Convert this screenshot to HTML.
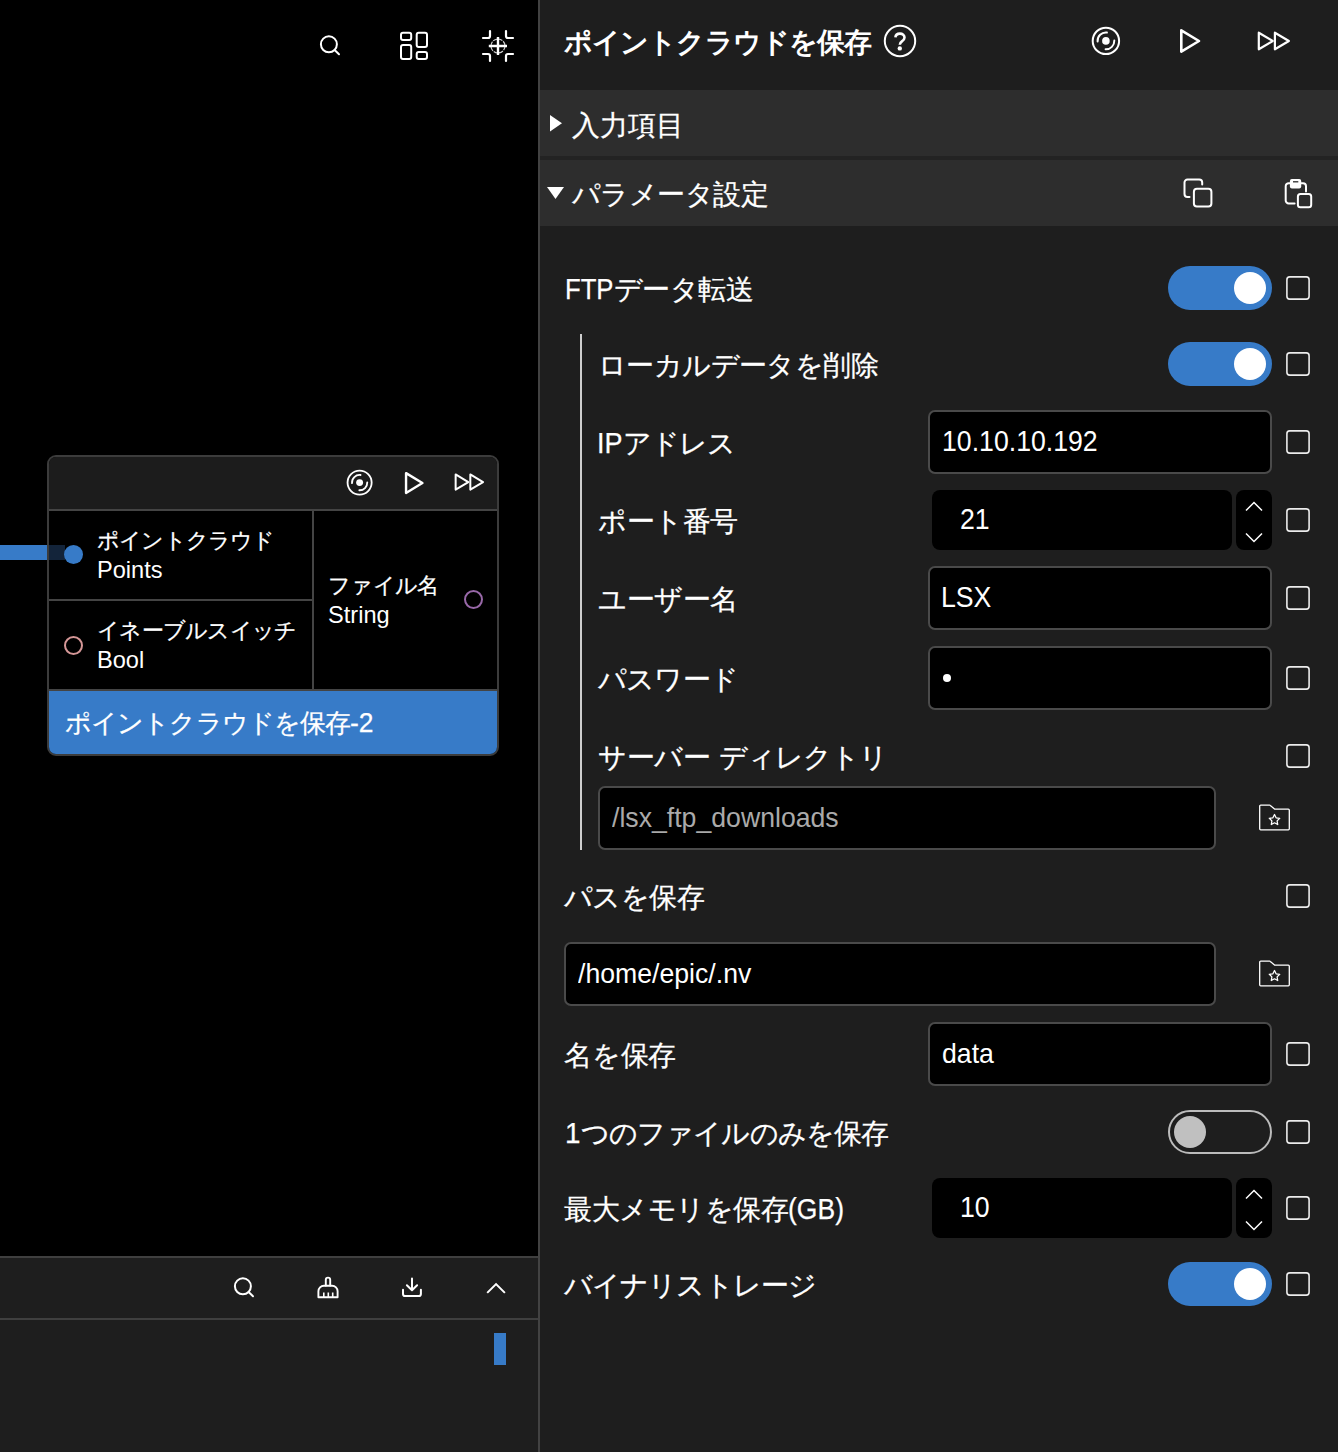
<!DOCTYPE html>
<html lang="ja">
<head>
<meta charset="utf-8">
<title>ポイントクラウドを保存</title>
<style>
*{box-sizing:border-box;margin:0;padding:0}
html,body{width:1338px;height:1452px;overflow:hidden;background:#000}
body{position:relative;font-family:"Liberation Sans",sans-serif;color:#fff}
.abs{position:absolute}
svg{position:absolute;overflow:visible}
.ic{fill:none;stroke:#fff;stroke-width:2;stroke-linecap:round;stroke-linejoin:round}
#right{position:absolute;left:540px;top:0;width:798px;height:1452px;background:#1e1e1e}
#vdiv{position:absolute;left:538px;top:0;width:2px;height:1452px;background:#424242}
.sec{position:absolute;left:540px;width:798px;background:#2d2d2d}
.lbl{position:absolute;font-size:28px;line-height:40px;white-space:nowrap;color:#fff}
.k{-webkit-text-stroke:.25px #fff}
.la{display:inline-block;line-height:0;white-space:nowrap;-webkit-text-stroke:.25px #fff}
.la>span{display:inline-block;transform-origin:0 50%;line-height:0}
.tg{position:absolute;left:1168px;width:104px;height:44px;border-radius:22px;background:#377bc8}
.tg i{position:absolute;left:66px;top:6px;width:32px;height:32px;border-radius:50%;background:#fff}
.tg.off{background:transparent;border:2px solid #bcbcbc}
.tg.off i{left:4px;top:4px;background:#c0c0c0}
.inp{position:absolute;height:64px;background:#000;border:2px solid #4a4a4a;border-radius:7px;font-size:28.6px;line-height:58px;padding-left:12px;white-space:nowrap;color:#fff}
.t{display:inline-block;transform:scaleX(.9325);transform-origin:0 50%}
.num{position:absolute;left:932px;width:300px;height:60px;background:#000;border-radius:8px;font-size:28.6px;line-height:58px;padding-left:28px}
.spn{position:absolute;left:1236px;width:36px;height:60px;background:#000;border-radius:8px}
.nt{position:absolute;font-size:22px;line-height:30px;white-space:nowrap}
</style>
</head>
<body>
<div id="ltool">
<svg style="left:318px;top:33px" width="24" height="24" viewBox="0 0 24 24"><circle cx="10.9" cy="11.3" r="8" class="ic"/><path class="ic" d="M16.6 17L21 21.2"/></svg>
<svg style="left:399px;top:31px" width="30" height="30" viewBox="0 0 30 30" class="ic"><rect x="2" y="1.700" width="10.200" height="7.300" rx="2"/><rect x="2" y="14.100" width="10.200" height="13.900" rx="2"/><rect x="17.700" y="1.700" width="10.300" height="14.300" rx="2"/><rect x="17.700" y="21" width="10.300" height="7" rx="2"/></svg>
<svg style="left:482px;top:30px" width="32" height="32" viewBox="0 0 32 32"><g class="ic" style="stroke-width:2.2"><path d="M1 8H6a2 2 0 0 0 2-2V1"/><path d="M24 1V6a2 2 0 0 0 2 2h5"/><path d="M1 24H6a2 2 0 0 1 2 2v5"/><path d="M31 24H26a2 2 0 0 0-2 2v5"/></g><circle cx="16" cy="16" r="7" fill="none" stroke="#fff" stroke-opacity=".8" stroke-width="1.200" stroke-dasharray="4.500 1"/><path d="M16 7V25M6.800 16H25" stroke="#fff" stroke-width="2.400" fill="none"/></svg>
</div>
<div id="node">
<div class="abs" style="left:0;top:545px;width:47px;height:15px;background:#377bc8"></div>
<div class="abs" style="left:47px;top:455px;width:452px;height:301px;border:2px solid #3c3c3c;border-radius:9px;background:#000;overflow:hidden">
<div class="abs" style="left:0;top:0;width:448px;height:52px;background:#1c1c1c"></div>
<div class="abs" style="left:0;top:52px;width:448px;height:2px;background:#444"></div>
<div class="abs" style="left:263px;top:54px;width:2px;height:178px;background:#444"></div>
<div class="abs" style="left:0;top:142px;width:263px;height:2px;background:#444"></div>
<div class="abs" style="left:0;top:232px;width:448px;height:2px;background:#444"></div>
<div class="abs" style="left:0;top:234px;width:448px;height:63px;background:#377bc8"></div>
</div>
<div class="abs" style="left:49px;top:545px;width:16px;height:15px;background:#13243a"></div>
<div class="abs" style="left:64px;top:545px;width:19px;height:19px;border-radius:50%;background:#377bc8"></div>
<svg style="left:63.7px;top:635.7px" width="19" height="19" viewBox="0 0 19 19"><circle cx="9.500" cy="9.500" r="8.500" fill="none" stroke="#d59797" stroke-width="2"/></svg>
<svg style="left:464px;top:590.2px" width="19" height="19" viewBox="0 0 19 19"><circle cx="9.500" cy="9.500" r="8.500" fill="none" stroke="#9868a8" stroke-width="2"/></svg>
<div class="nt" style="left:97px;top:526px"><span class="k" style="letter-spacing:-0.8px">ポイントクラウド</span></div>
<div class="nt" style="left:97px;top:554.5px;font-size:23.6px">Points</div>
<div class="nt" style="left:97px;top:616px"><span class="k" style="letter-spacing:-0.71px">イネーブルスイッチ</span></div>
<div class="nt" style="left:97px;top:644.5px;font-size:23.6px">Bool</div>
<div class="nt" style="left:328px;top:571px"><span class="k" style="letter-spacing:-0.64px">ファイル名</span></div>
<div class="nt" style="left:328px;top:599.5px;font-size:23.6px">String</div>
<div class="abs" style="left:65px;top:704px;font-size:26px;line-height:38px;white-space:nowrap"><span class="k" style="letter-spacing:-0.88px">ポイントクラウドを保存</span><span class="la" style="width:23.5px;font-size:28px"><span style="transform:scaleX(0.944)">-2</span></span></div>
<svg style="left:345.5px;top:469.2px" width="27.4" height="27.4" viewBox="0 0 30 30"><circle cx="14.9" cy="14.9" r="13.2" class="ic"/><circle cx="14.9" cy="14.9" r="3.8" fill="#fff"/><path class="ic" d="M15.9 6.600A8.300 8.300 0 0 0 6.600 15.500"/><path class="ic" d="M23.300 14.600A8.400 8.400 0 0 1 14.600 23.300"/></svg>
<svg style="left:403.1px;top:470.6px" width="22.2" height="24.05" viewBox="0 0 24 26"><path class="ic" style="stroke-width:2.6" d="M3.300 2.300L21 13L3.300 23.700Z"/></svg>
<svg style="left:453.8px;top:472.4px" width="31" height="20.06" viewBox="0 0 34 22"><g class="ic" style="stroke-width:2.2"><path d="M1.800 2.700L15.700 11L1.800 19.300Z"/><path d="M17.900 2.700L31.900 11L17.900 19.300Z"/></g></svg>
</div>
<div id="bottom">
<div class="abs" style="left:0;top:1256px;width:538px;height:196px;background:#1e1e1e"></div>
<div class="abs" style="left:0;top:1256px;width:538px;height:2px;background:#3f3f3f"></div>
<div class="abs" style="left:0;top:1318px;width:538px;height:2px;background:#3f3f3f"></div>
<div class="abs" style="left:494px;top:1333px;width:12px;height:32px;background:#377bc8"></div>
<svg style="left:232.1px;top:1275px" width="24" height="24" viewBox="0 0 24 24"><circle cx="10.9" cy="11.3" r="8" class="ic"/><path class="ic" d="M16.6 17L21 21.2"/></svg>
<svg style="left:317px;top:1276px" width="22" height="23" viewBox="0 0 22 23"><g class="ic" style="stroke-width:1.9"><path d="M8.800 9.500V3.800a2.200 2.200 0 0 1 4.400 0V9.500"/><path d="M1.400 21.300V15.300a5.500 5.500 0 0 1 5.500-5.500h8.200a5.500 5.500 0 0 1 5.500 5.500v6Z"/><path d="M6.800 16.600V21M11.300 16.600V21M15.700 16.600V21" style="stroke-width:1.600;stroke-linecap:butt"/></g></svg>
<svg style="left:401px;top:1277px" width="22" height="22" viewBox="0 0 22 22"><g class="ic"><path d="M11 1.500V13M5.900 8.200L11 13.300L16.100 8.200"/><path d="M2 12.800V17a2.100 2.100 0 0 0 2.100 2.100H17.800a2.100 2.100 0 0 0 2.100-2.100V12.800"/></g></svg>
<svg style="left:486px;top:1282px" width="20" height="12" viewBox="0 0 20 12"><path d="M1.200 10.900L10.050 2.100L18.900 10.900" fill="none" stroke="#fff" stroke-width="2"/></svg>
</div>
<div id="right"></div>
<div id="vdiv"></div>
<div id="rhead">
<div class="abs" style="left:564px;top:23px;font-size:28px;line-height:40px;font-weight:bold;white-space:nowrap;letter-spacing:-.9px">ポイントクラウドを保存</div>
<svg style="left:884px;top:25px" width="32" height="32" viewBox="0 0 32 32"><circle cx="16" cy="16" r="15.200" fill="none" stroke="#fff" stroke-width="2"/><path d="M11.400 12.300C11.600 10 13.400 8.600 15.900 8.600C18.600 8.600 20.500 10.200 20.500 12.500C20.500 14.400 19.400 15.400 17.900 16.400C16.500 17.400 15.800 18.200 15.800 19.800" fill="none" stroke="#fff" stroke-width="2.600"/><circle cx="15.800" cy="23.400" r="2.200" fill="#fff"/></svg>
<svg style="left:1091px;top:26px" width="30" height="30" viewBox="0 0 30 30"><circle cx="14.9" cy="14.9" r="13.2" class="ic"/><circle cx="14.9" cy="14.9" r="3.8" fill="#fff"/><path class="ic" d="M15.9 6.600A8.300 8.300 0 0 0 6.600 15.500"/><path class="ic" d="M23.300 14.600A8.400 8.400 0 0 1 14.600 23.300"/></svg>
<svg style="left:1178px;top:28px" width="24" height="26" viewBox="0 0 24 26"><path class="ic" style="stroke-width:2.6" d="M3.300 2.300L21 13L3.300 23.700Z"/></svg>
<svg style="left:1257px;top:30px" width="34" height="22" viewBox="0 0 34 22"><g class="ic" style="stroke-width:2.2"><path d="M1.800 2.700L15.700 11L1.800 19.300Z"/><path d="M17.900 2.700L31.900 11L17.900 19.300Z"/></g></svg>
<div class="sec" style="top:90px;height:66px"></div>
<div class="abs" style="left:540px;top:156px;width:798px;height:4px;background:#232323"></div>
<div class="sec" style="top:160px;height:66px"></div>
<svg style="left:550px;top:115px" width="12" height="16.4" viewBox="0 0 12 16.4"><path d="M0 0L12 8.200L0 16.400Z" fill="#fff"/></svg>
<svg style="left:547px;top:187px" width="17" height="12" viewBox="0 0 17 12"><path d="M0 0L17 0L8.500 12Z" fill="#fff"/></svg>
<div class="lbl" style="left:572px;top:106px"><span class="k">入力項目</span></div>
<div class="lbl" style="left:572px;top:175px"><span class="k" style="letter-spacing:-0.57px">パラメータ設定</span></div>
<svg style="left:1183px;top:178px" width="30" height="30" viewBox="0 0 30 30"><g class="ic"><rect x="10.900" y="10.700" width="17.500" height="17.900" rx="3"/><path d="M6.500 19H4.500a3 3 0 0 1-3-3V4.500a3 3 0 0 1 3-3H16.200a3 3 0 0 1 3 3V6.500"/></g></svg>
<svg style="left:1284px;top:178px" width="30" height="31" viewBox="0 0 30 31"><g class="ic"><rect x="13.900" y="16" width="13.300" height="13.300" rx="2.500"/><path d="M10.600 25.400H4.700a3 3 0 0 1-3-3V8.200a3 3 0 0 1 3-3H19a3 3 0 0 1 3 3V13.600"/></g><rect x="5.900" y=".9" width="11.300" height="9.500" rx="2" fill="#fff"/><path d="M9 3.800H14.300" stroke="#2d2d2d" stroke-width="1.300"/></svg>
</div>
<div id="rform">
<div class="abs" style="left:580px;top:334px;width:2px;height:516px;background:#cecece"></div>
<div class="lbl" style="left:565px;top:270px"><span class="la" style="width:48.5px;font-size:30px"><span style="transform:scaleX(0.856)">FTP</span></span><span class="k" style="letter-spacing:-0.4px">データ転送</span></div>
<div class="tg" style="top:266px"><i></i></div>
<svg style="left:1286px;top:276px" width="24" height="24" viewBox="0 0 24 24"><rect x=".9" y=".9" width="22.200" height="22.200" rx="2.800" fill="none" stroke="#ececec" stroke-width="1.600"/></svg>
<div class="lbl" style="left:598px;top:346px"><span class="k" style="letter-spacing:-0.6px">ローカルデータを削除</span></div>
<div class="tg" style="top:342px"><i></i></div>
<svg style="left:1286px;top:352px" width="24" height="24" viewBox="0 0 24 24"><rect x=".9" y=".9" width="22.200" height="22.200" rx="2.800" fill="none" stroke="#ececec" stroke-width="1.600"/></svg>
<div class="lbl" style="left:597px;top:424px"><span class="la" style="width:25.5px;font-size:30px"><span style="transform:scaleX(0.900)">IP</span></span><span class="k" style="letter-spacing:-1px">アドレス</span></div>
<div class="inp" style="left:928px;top:410px;width:344px"><span class="t">10.10.10.192</span></div>
<svg style="left:1286px;top:430px" width="24" height="24" viewBox="0 0 24 24"><rect x=".9" y=".9" width="22.200" height="22.200" rx="2.800" fill="none" stroke="#ececec" stroke-width="1.600"/></svg>
<div class="lbl" style="left:598px;top:502px"><span class="k" style="letter-spacing:-0.4px">ポート番号</span></div>
<div class="num" style="top:490px"><span class="t">21</span></div>
<div class="spn" style="top:490px"><svg style="left:9px;top:11px" width="18" height="10" viewBox="0 0 18 10"><path d="M1 9.500L9 1.500L17 9.500" fill="none" stroke="#fff" stroke-width="1.500"/></svg>
<svg style="left:9px;top:43px" width="18" height="10" viewBox="0 0 18 10"><path d="M1 .5L9 8.500L17 .5" fill="none" stroke="#fff" stroke-width="1.500"/></svg>
</div>
<svg style="left:1286px;top:508px" width="24" height="24" viewBox="0 0 24 24"><rect x=".9" y=".9" width="22.200" height="22.200" rx="2.800" fill="none" stroke="#ececec" stroke-width="1.600"/></svg>
<div class="lbl" style="left:598px;top:580px"><span class="k" style="letter-spacing:-0.4px">ユーザー名</span></div>
<div class="inp" style="left:928px;top:566px;width:344px;padding-left:11px"><span class="t">LSX</span></div>
<svg style="left:1286px;top:586px" width="24" height="24" viewBox="0 0 24 24"><rect x=".9" y=".9" width="22.200" height="22.200" rx="2.800" fill="none" stroke="#ececec" stroke-width="1.600"/></svg>
<div class="lbl" style="left:598px;top:660px"><span class="k" style="letter-spacing:-0.8px">パスワード</span></div>
<div class="inp" style="left:928px;top:646px;width:344px"><span style="position:absolute;left:13px;top:25.5px;width:8.300px;height:8.300px;border-radius:50%;background:#fff"></span></div>
<svg style="left:1286px;top:666px" width="24" height="24" viewBox="0 0 24 24"><rect x=".9" y=".9" width="22.200" height="22.200" rx="2.800" fill="none" stroke="#ececec" stroke-width="1.600"/></svg>
<div class="lbl" style="left:598px;top:738px"><span class="k" style="letter-spacing:-0.5px">サーバー</span><span style="letter-spacing:1.500px"> </span><span class="k" style="letter-spacing:-1px">ディレクトリ</span></div>
<svg style="left:1286px;top:744px" width="24" height="24" viewBox="0 0 24 24"><rect x=".9" y=".9" width="22.200" height="22.200" rx="2.800" fill="none" stroke="#ececec" stroke-width="1.600"/></svg>
<div class="inp" style="left:598px;top:786px;width:618px;color:#aaa"><span class="t" style="font-size:27.4px;transform:scaleX(.973)">/lsx_ftp_downloads</span></div>
<svg style="left:1259px;top:804px" width="32" height="27" viewBox="0 0 32 27"><path d="M1.700 1.100H10.600a1 1 0 0 1 .7.300L15.800 5.200H29.300a1 1 0 0 1 1 1V24.800a1 1 0 0 1-1 1H1.700a1 1 0 0 1-1-1V2.100a1 1 0 0 1 1-1Z" fill="none" stroke="#fff" stroke-width="1.300" stroke-linejoin="round"/><path d="M15.500 10.500l1.600 3.300 3.600 .5-2.600 2.600 .6 3.600-3.200-1.700-3.200 1.700 .6-3.600-2.600-2.600 3.600-.5z" fill="none" stroke="#fff" stroke-width="1.300" stroke-linejoin="round"/></svg>
<div class="lbl" style="left:564px;top:878px"><span class="k" style="letter-spacing:-0.6px">パスを保存</span></div>
<svg style="left:1286px;top:884px" width="24" height="24" viewBox="0 0 24 24"><rect x=".9" y=".9" width="22.200" height="22.200" rx="2.800" fill="none" stroke="#ececec" stroke-width="1.600"/></svg>
<div class="inp" style="left:564px;top:942px;width:652px"><span class="t" style="font-size:27.4px;transform:scaleX(.973)">/home/epic/.nv</span></div>
<svg style="left:1259px;top:960px" width="32" height="27" viewBox="0 0 32 27"><path d="M1.700 1.100H10.600a1 1 0 0 1 .7.300L15.800 5.200H29.300a1 1 0 0 1 1 1V24.800a1 1 0 0 1-1 1H1.700a1 1 0 0 1-1-1V2.100a1 1 0 0 1 1-1Z" fill="none" stroke="#fff" stroke-width="1.300" stroke-linejoin="round"/><path d="M15.500 10.500l1.600 3.300 3.600 .5-2.600 2.600 .6 3.600-3.200-1.700-3.200 1.700 .6-3.600-2.600-2.600 3.600-.5z" fill="none" stroke="#fff" stroke-width="1.300" stroke-linejoin="round"/></svg>
<div class="lbl" style="left:564px;top:1036px"><span class="k" style="letter-spacing:-0.25px">名を保存</span></div>
<div class="inp" style="left:928px;top:1022px;width:344px"><span class="t" style="font-size:27.4px;transform:scaleX(.973)">data</span></div>
<svg style="left:1286px;top:1042px" width="24" height="24" viewBox="0 0 24 24"><rect x=".9" y=".9" width="22.200" height="22.200" rx="2.800" fill="none" stroke="#ececec" stroke-width="1.600"/></svg>
<div class="lbl" style="left:565px;top:1114px"><span class="la" style="width:15.5px;font-size:30px"><span style="transform:scaleX(0.929)">1</span></span><span class="k" style="letter-spacing:-0.82px">つのファイルのみを保存</span></div>
<div class="tg off" style="top:1110px"><i></i></div>
<svg style="left:1286px;top:1120px" width="24" height="24" viewBox="0 0 24 24"><rect x=".9" y=".9" width="22.200" height="22.200" rx="2.800" fill="none" stroke="#ececec" stroke-width="1.600"/></svg>
<div class="lbl" style="left:564px;top:1190px"><span class="k" style="letter-spacing:-0.5px">最大メモリを保存</span><span class="la" style="width:56px;font-size:30px"><span style="transform:scaleX(0.884)">(GB)</span></span></div>
<div class="num" style="top:1178px"><span class="t">10</span></div>
<div class="spn" style="top:1178px"><svg style="left:9px;top:11px" width="18" height="10" viewBox="0 0 18 10"><path d="M1 9.500L9 1.500L17 9.500" fill="none" stroke="#fff" stroke-width="1.500"/></svg>
<svg style="left:9px;top:43px" width="18" height="10" viewBox="0 0 18 10"><path d="M1 .5L9 8.500L17 .5" fill="none" stroke="#fff" stroke-width="1.500"/></svg>
</div>
<svg style="left:1286px;top:1196px" width="24" height="24" viewBox="0 0 24 24"><rect x=".9" y=".9" width="22.200" height="22.200" rx="2.800" fill="none" stroke="#ececec" stroke-width="1.600"/></svg>
<div class="lbl" style="left:564px;top:1266px"><span class="k" style="letter-spacing:-0.89px">バイナリストレージ</span></div>
<div class="tg" style="top:1262px"><i></i></div>
<svg style="left:1286px;top:1272px" width="24" height="24" viewBox="0 0 24 24"><rect x=".9" y=".9" width="22.200" height="22.200" rx="2.800" fill="none" stroke="#ececec" stroke-width="1.600"/></svg>
</div>
</body>
</html>
